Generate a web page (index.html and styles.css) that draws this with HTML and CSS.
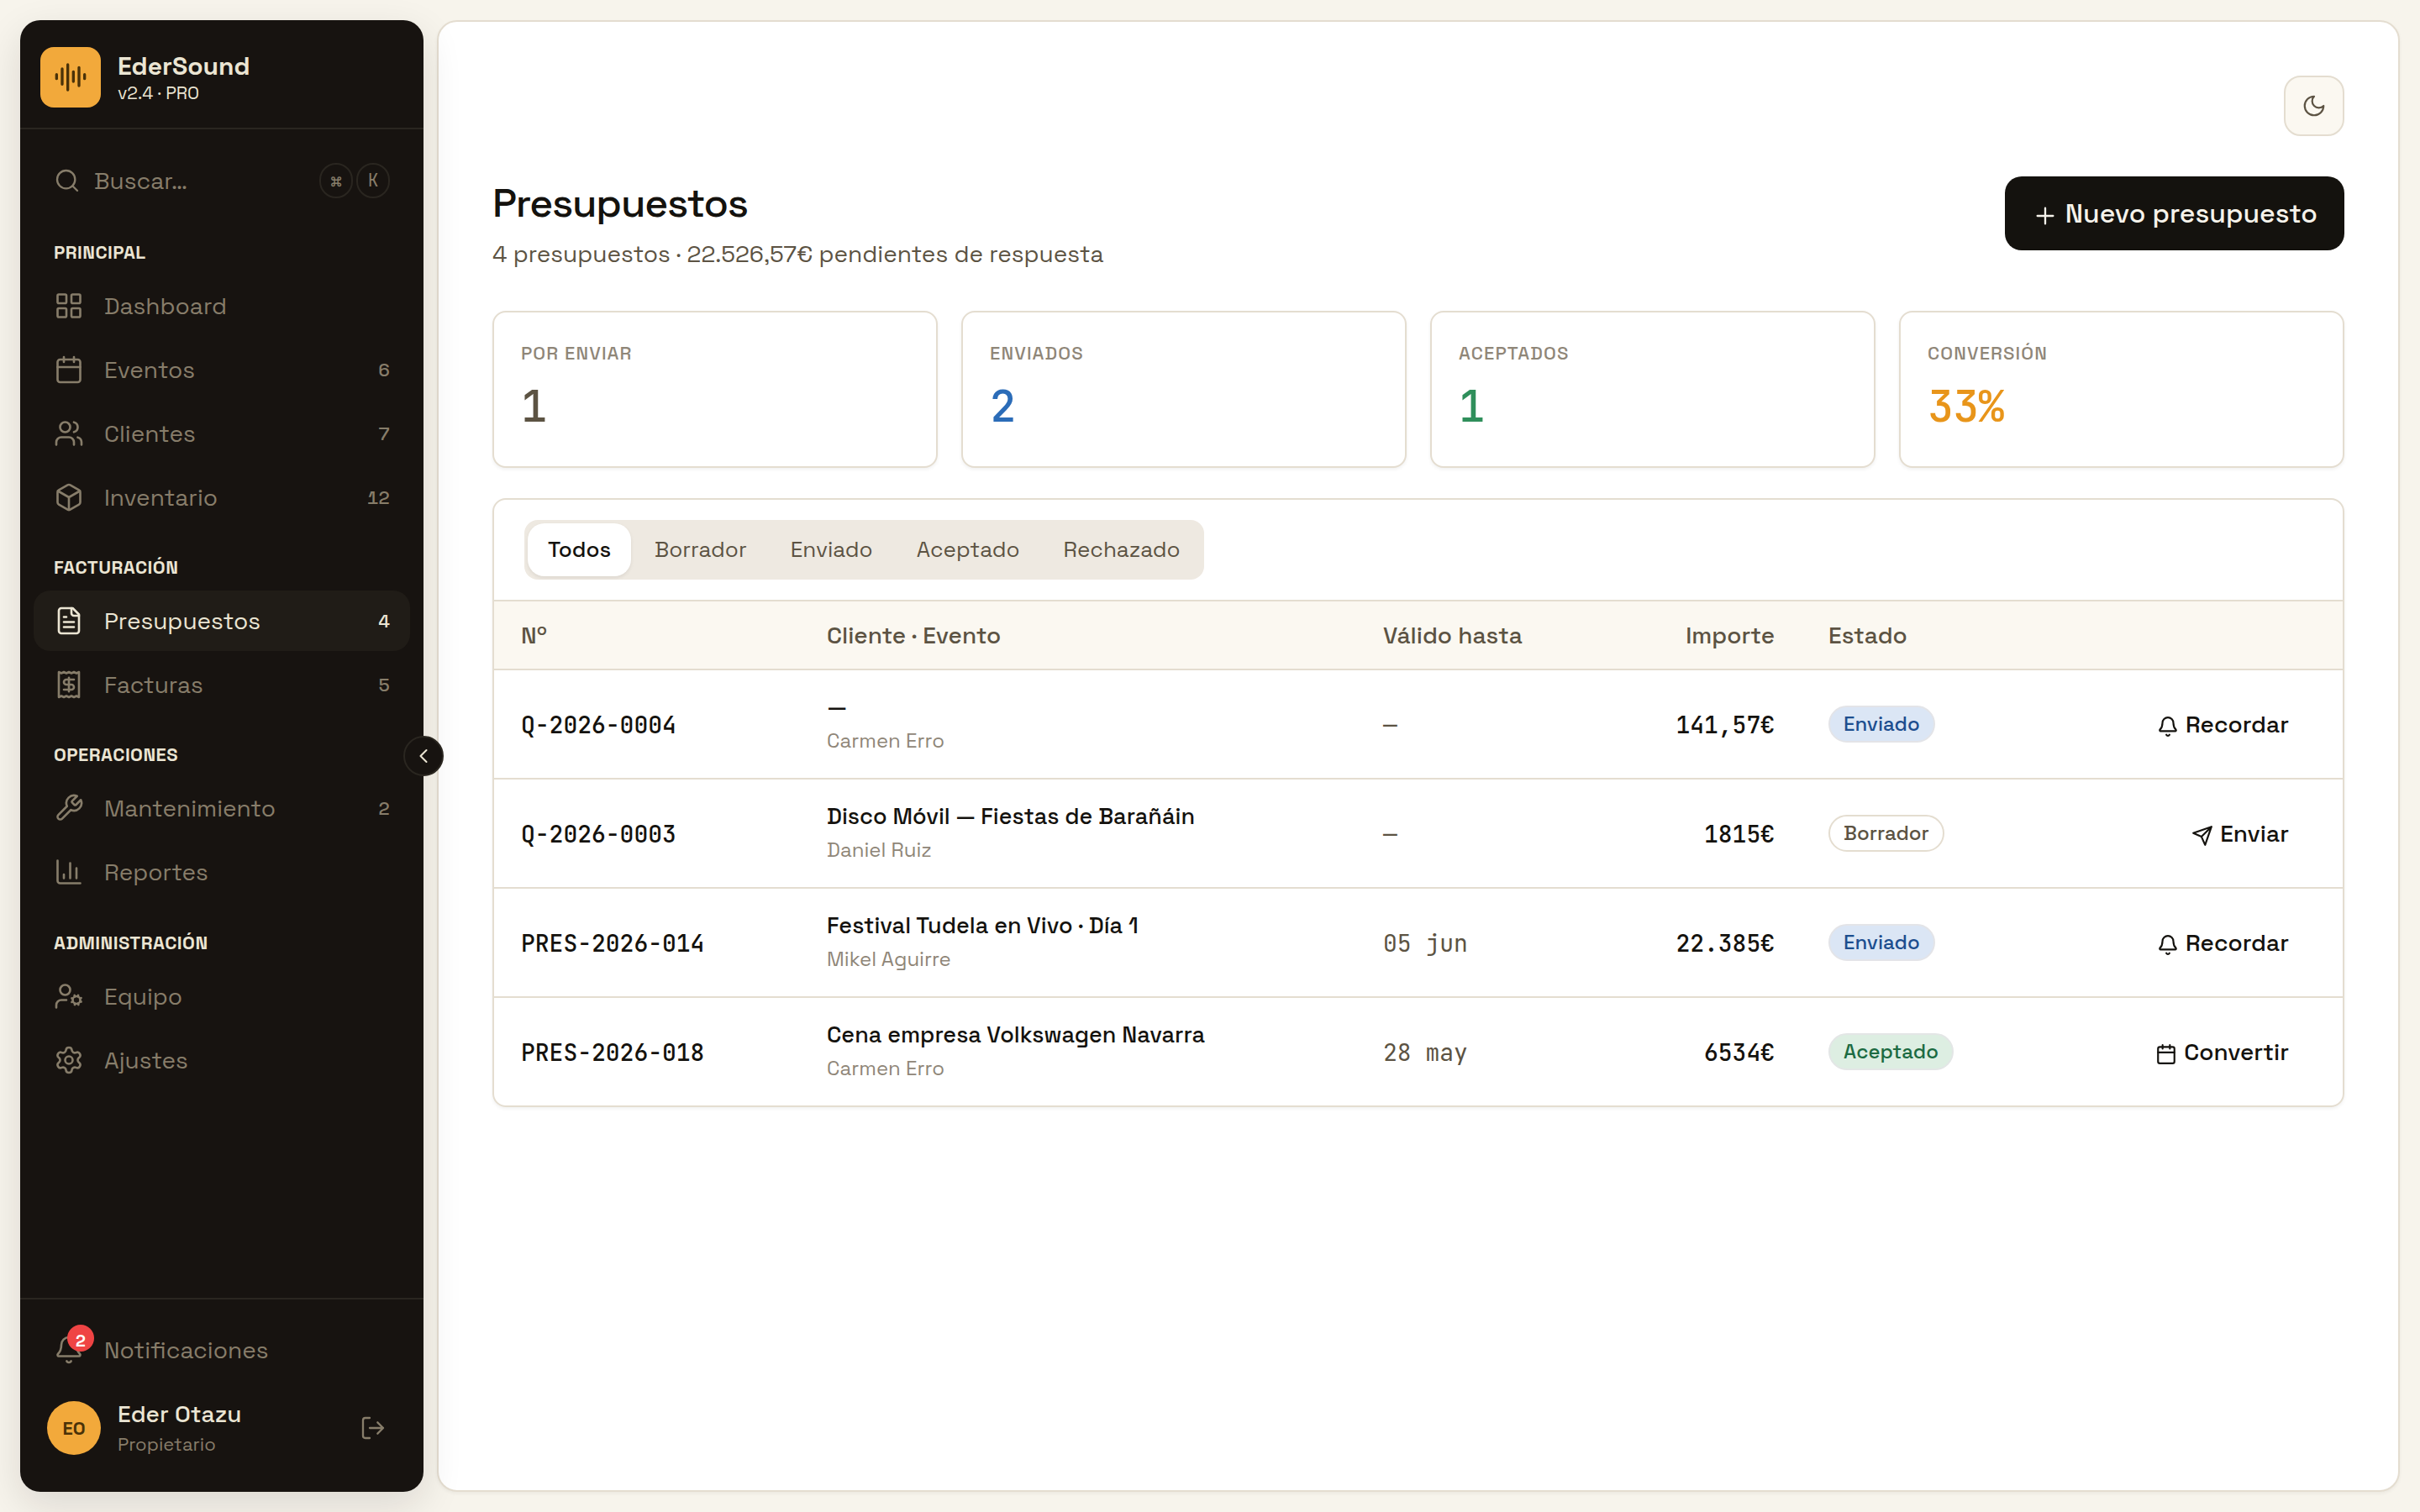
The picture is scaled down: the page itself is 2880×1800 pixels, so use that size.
FILE: index.html
```html
<!DOCTYPE html>
<html lang="es">
<head>
    <meta charset="UTF-8">
    <meta name="viewport" content="width=device-width, initial-scale=1.0">
    <title>EderSound - Presupuestos</title>
    <link rel="stylesheet" href="styles.css">
</head>
<body>
<!-- iconos -->
<svg class="sprite" width="0" height="0">
    <symbol id="i-audio" viewBox="0 0 24 24"><path d="M2 10v3M6 6v11M10 3v18M14 8v7M18 5v13M22 10v3"/></symbol>
    <symbol id="i-search" viewBox="0 0 24 24"><circle cx="11" cy="11" r="8"/><path d="m21 21-4.3-4.3"/></symbol>
    <symbol id="i-grid" viewBox="0 0 24 24"><rect x="3" y="3" width="7" height="7" rx="1"/><rect x="14" y="3" width="7" height="7" rx="1"/><rect x="14" y="14" width="7" height="7" rx="1"/><rect x="3" y="14" width="7" height="7" rx="1"/></symbol>
    <symbol id="i-calendar" viewBox="0 0 24 24"><path d="M8 2v4M16 2v4M3 10h18"/><rect x="3" y="4" width="18" height="18" rx="2"/></symbol>
    <symbol id="i-users" viewBox="0 0 24 24"><path d="M16 21v-2a4 4 0 0 0-4-4H6a4 4 0 0 0-4 4v2M22 21v-2a4 4 0 0 0-3-3.87M16 3.13a4 4 0 0 1 0 7.75"/><circle cx="9" cy="7" r="4"/></symbol>
    <symbol id="i-box" viewBox="0 0 24 24"><path d="M21 8a2 2 0 0 0-1-1.73l-7-4a2 2 0 0 0-2 0l-7 4A2 2 0 0 0 3 8v8a2 2 0 0 0 1 1.73l7 4a2 2 0 0 0 2 0l7-4A2 2 0 0 0 21 16Z"/><path d="m3.3 7 8.7 5 8.7-5M12 22V12"/></symbol>
    <symbol id="i-file" viewBox="0 0 24 24"><path d="M15 2H6a2 2 0 0 0-2 2v16a2 2 0 0 0 2 2h12a2 2 0 0 0 2-2V7Z"/><path d="M14 2v4a2 2 0 0 0 2 2h4M10 9H8M16 13H8M16 17H8"/></symbol>
    <symbol id="i-receipt" viewBox="0 0 24 24"><path d="M4 2v20l2-1 2 1 2-1 2 1 2-1 2 1 2-1 2 1V2l-2 1-2-1-2 1-2-1-2 1-2-1-2 1Z"/><path d="M16 8h-6a2 2 0 1 0 0 4h4a2 2 0 1 1 0 4H8M12 17.5v-11"/></symbol>
    <symbol id="i-wrench" viewBox="0 0 24 24"><path d="M14.7 6.3a1 1 0 0 0 0 1.4l1.6 1.6a1 1 0 0 0 1.4 0l3.77-3.77a6 6 0 0 1-7.94 7.94l-6.91 6.91a2.12 2.12 0 0 1-3-3l6.91-6.91a6 6 0 0 1 7.94-7.94l-3.76 3.76z"/></symbol>
    <symbol id="i-chart" viewBox="0 0 24 24"><path d="M3 3v16a2 2 0 0 0 2 2h16M18 17V9M13 17V5M8 17v-3"/></symbol>
    <symbol id="i-usercog" viewBox="0 0 24 24"><circle cx="9" cy="7" r="4"/><circle cx="18" cy="15" r="3"/><path d="M10 15H6a4 4 0 0 0-4 4v2M21.7 16.4l-.9-.3M15.2 13.9l-.9-.3M16.6 18.7l.3-.9M19.1 12.2l.3-.9M19.6 18.7l-.4-1M16.8 12.3l-.4-1M14.3 16.6l1-.4M20.7 13.8l1-.4"/></symbol>
    <symbol id="i-settings" viewBox="0 0 24 24"><path d="M9.671 4.136a2.34 2.34 0 0 1 4.659 0 2.34 2.34 0 0 0 3.319 1.915 2.34 2.34 0 0 1 2.33 4.033 2.34 2.34 0 0 0 0 3.831 2.34 2.34 0 0 1-2.33 4.033 2.34 2.34 0 0 0-3.319 1.915 2.34 2.34 0 0 1-4.659 0 2.34 2.34 0 0 0-3.32-1.915 2.34 2.34 0 0 1-2.33-4.033 2.34 2.34 0 0 0 0-3.831A2.34 2.34 0 0 1 6.35 6.051a2.34 2.34 0 0 0 3.319-1.915"/><circle cx="12" cy="12" r="3"/></symbol>
    <symbol id="i-bell" viewBox="0 0 24 24"><path d="M10.268 21a2 2 0 0 0 3.464 0M3.262 15.326A1 1 0 0 0 4 17h16a1 1 0 0 0 .74-1.673C19.41 13.956 18 12.499 18 8A6 6 0 0 0 6 8c0 4.499-1.411 5.956-2.738 7.326"/></symbol>
    <symbol id="i-logout" viewBox="0 0 24 24"><path d="m16 17 5-5-5-5M21 12H9M9 21H5a2 2 0 0 1-2-2V5a2 2 0 0 1 2-2h4"/></symbol>
    <symbol id="i-chevron" viewBox="0 0 24 24"><path d="m15 18-6-6 6-6"/></symbol>
    <symbol id="i-moon" viewBox="0 0 24 24"><path d="M12 3a6 6 0 0 0 9 9 9 9 0 1 1-9-9Z"/></symbol>
    <symbol id="i-plus" viewBox="0 0 24 24"><path d="M5 12h14M12 5v14"/></symbol>
    <symbol id="i-send" viewBox="0 0 24 24"><path d="m22 2-7 20-4-9-9-4ZM22 2 11 13"/></symbol>
</svg>

<div class="app">
    <aside class="sidebar">
        <div class="brand">
            <div class="logo"><svg class="icon"><use href="#i-audio"/></svg></div>
            <div>
                <p class="brand-name">EderSound</p>
                <p class="brand-version">v2.4 · PRO</p>
            </div>
        </div>

        <nav class="nav">
            <div class="search">
                <svg class="icon"><use href="#i-search"/></svg>
                <span class="search-text">Buscar…</span>
                <kbd>⌘</kbd>
                <kbd>K</kbd>
            </div>
            <h2>Principal</h2>
            <ul>
                <li><svg class="icon"><use href="#i-grid"/></svg><span>Dashboard</span></li>
                <li><svg class="icon"><use href="#i-calendar"/></svg><span>Eventos</span><b>6</b></li>
                <li><svg class="icon"><use href="#i-users"/></svg><span>Clientes</span><b>7</b></li>
                <li><svg class="icon"><use href="#i-box"/></svg><span>Inventario</span><b>12</b></li>
            </ul>
            <h2>Facturación</h2>
            <ul>
                <li class="active"><svg class="icon"><use href="#i-file"/></svg><span>Presupuestos</span><b>4</b></li>
                <li><svg class="icon"><use href="#i-receipt"/></svg><span>Facturas</span><b>5</b></li>
            </ul>
            <h2>Operaciones</h2>
            <ul>
                <li><svg class="icon"><use href="#i-wrench"/></svg><span>Mantenimiento</span><b>2</b></li>
                <li><svg class="icon"><use href="#i-chart"/></svg><span>Reportes</span></li>
            </ul>
            <h2>Administración</h2>
            <ul>
                <li><svg class="icon"><use href="#i-usercog"/></svg><span>Equipo</span></li>
                <li><svg class="icon"><use href="#i-settings"/></svg><span>Ajustes</span></li>
            </ul>
        </nav>

        <div class="side-footer">
            <div class="notifications">
                <div class="bell"><svg class="icon"><use href="#i-bell"/></svg><span class="bell-count">2</span></div>
                <span>Notificaciones</span>
            </div>
            <div class="user">
                <div class="avatar">EO</div>
                <div class="user-info">
                    <p class="user-name">Eder Otazu</p>
                    <p class="user-role">Propietario</p>
                </div>
                <svg class="icon"><use href="#i-logout"/></svg>
            </div>
        </div>
        <button class="collapse"><svg class="icon"><use href="#i-chevron"/></svg></button>
    </aside>

    <main class="main">
        <div class="topbar">
            <button class="theme"><svg class="icon"><use href="#i-moon"/></svg></button>
        </div>
        <header class="page-header">
            <div>
                <h1>Presupuestos</h1>
                <p class="subtitle">4 presupuestos · 22.526,57€ pendientes de respuesta</p>
            </div>
            <button class="new"><svg class="icon"><use href="#i-plus"/></svg>Nuevo presupuesto</button>
        </header>

        <section class="stats">
            <div class="stat"><h3>Por enviar</h3><p class="value">1</p></div>
            <div class="stat"><h3>Enviados</h3><p class="value blue">2</p></div>
            <div class="stat"><h3>Aceptados</h3><p class="value green">1</p></div>
            <div class="stat"><h3>Conversión</h3><p class="value amber">33%</p></div>
        </section>

        <section class="panel">
            <div class="toolbar">
                <div class="tabs">
                    <button class="tab selected">Todos</button>
                    <button class="tab">Borrador</button>
                    <button class="tab">Enviado</button>
                    <button class="tab">Aceptado</button>
                    <button class="tab">Rechazado</button>
                </div>
            </div>
            <table>
                <colgroup>
                    <col class="c-num"><col class="c-client"><col class="c-date"><col class="c-amount"><col class="c-state"><col>
                </colgroup>
                <thead>
                    <tr><th>Nº</th><th>Cliente · Evento</th><th>Válido hasta</th><th class="right">Importe</th><th>Estado</th><th></th></tr>
                </thead>
                <tbody>
                    <tr>
                        <td class="mono">Q-2026-0004</td>
                        <td><p class="event">—</p><p class="client">Carmen Erro</p></td>
                        <td class="mono date">—</td>
                        <td class="mono right">141,57€</td>
                        <td><span class="badge sent">Enviado</span></td>
                        <td><button class="action"><svg class="icon"><use href="#i-bell"/></svg>Recordar</button></td>
                    </tr>
                    <tr>
                        <td class="mono">Q-2026-0003</td>
                        <td><p class="event">Disco Móvil — Fiestas de Barañáin</p><p class="client">Daniel Ruiz</p></td>
                        <td class="mono date">—</td>
                        <td class="mono right">1815€</td>
                        <td><span class="badge">Borrador</span></td>
                        <td><button class="action"><svg class="icon"><use href="#i-send"/></svg>Enviar</button></td>
                    </tr>
                    <tr>
                        <td class="mono">PRES-2026-014</td>
                        <td><p class="event">Festival Tudela en Vivo · Día 1</p><p class="client">Mikel Aguirre</p></td>
                        <td class="mono date">05 jun</td>
                        <td class="mono right">22.385€</td>
                        <td><span class="badge sent">Enviado</span></td>
                        <td><button class="action"><svg class="icon"><use href="#i-bell"/></svg>Recordar</button></td>
                    </tr>
                    <tr>
                        <td class="mono">PRES-2026-018</td>
                        <td><p class="event">Cena empresa Volkswagen Navarra</p><p class="client">Carmen Erro</p></td>
                        <td class="mono date">28 may</td>
                        <td class="mono right">6534€</td>
                        <td><span class="badge accepted">Aceptado</span></td>
                        <td><button class="action"><svg class="icon"><use href="#i-calendar"/></svg>Convertir</button></td>
                    </tr>
                </tbody>
            </table>
        </section>
    </main>
</div>
</body>
</html>
```
FILE: styles.css
```css
:root{
    --bg: #f7f4ec;
    --line: #e4ddd0;
    --ink: #14120e;
    --ink-2: #5c5343;
    --ink-3: #8f8678;
    --dark: #171310;
    --dark-line: #2a2620;
    --cream: #ebe5d3;
    --muted: #877d6a;
    --amber: #f2a93b;
    --sans: "Space Grotesk", Inter, sans-serif;
    --mono: "JetBrains Mono", "DejaVu Sans Mono", monospace;
}
*{
    box-sizing: border-box;
    margin: 0;
    padding: 0;
}
body{
    background: var(--bg);
    color: var(--ink);
    font-family: var(--sans);
    font-size: 28px;
}
button{
    font: inherit;
    color: inherit;
    border: none;
    background: none;
}
ul{
    list-style: none;
}
.sprite{
    position: absolute;
}
.icon{
    display: block;
    flex: none;
    fill: none;
    stroke: currentColor;
    stroke-width: 1.75;
    stroke-linecap: round;
    stroke-linejoin: round;
}
.app{
    display: flex;
    gap: 16px;
    height: 1800px;
    padding: 24px;
}

/* sidebar */
.sidebar{
    position: relative;
    z-index: 1;
    display: flex;
    flex-direction: column;
    width: 480px;
    border-radius: 24px;
    background: var(--dark);
    color: var(--muted);
    box-shadow: 0 16px 48px rgba(23,19,16,.12);
}
.brand{
    display: flex;
    gap: 20px;
    height: 130px;
    padding: 32px 24px 0;
    border-bottom: 2px solid var(--dark-line);
    color: var(--cream);
}
.logo{
    display: flex;
    align-items: center;
    justify-content: center;
    width: 72px;
    height: 72px;
    border-radius: 16px;
    background: var(--amber);
    color: #4a3208;
}
.logo .icon{
    width: 40px;
    height: 40px;
    stroke-width: 2;
}
.brand-name{
    margin-top: 4px;
    font-size: 30px;
    font-weight: 600;
    line-height: 38px;
}
.brand-version{
    font-size: 21px;
    line-height: 26px;
}
.nav{
    flex: 1;
    padding: 25px 16px 0;
}
.search{
    display: flex;
    align-items: center;
    gap: 4px;
    height: 72px;
    padding: 0 24px;
}
.search .icon{
    width: 32px;
    height: 32px;
    margin-right: 12px;
}
.search-text{
    flex: 1;
}
kbd{
    width: 40px;
    height: 42px;
    border: 2px solid var(--dark-line);
    border-radius: 21px;
    font-family: var(--mono);
    font-size: 21px;
    line-height: 38px;
    text-align: center;
}
.nav h2{
    margin: 33.4px 0 14px 24px;
    color: var(--cream);
    font-size: 22px;
    font-weight: 600;
    line-height: 28px;
    letter-spacing: .02em;
    text-transform: uppercase;
}
.search + h2{
    margin-top: 34.7px;
}
.nav ul{
    display: flex;
    flex-direction: column;
    gap: 4px;
}
.nav li{
    display: flex;
    align-items: center;
    gap: 24px;
    height: 72px;
    padding: 0 24px;
    border-radius: 20px;
}
.nav li .icon, .bell .icon{
    width: 36px;
    height: 36px;
}
.nav li span{
    flex: 1;
}
.nav li b{
    font-size: 22px;
    font-weight: 500;
    font-variant-numeric: tabular-nums;
}
.nav li.active{
    background: #201c17;
    color: var(--cream);
}
.side-footer{
    height: 231px;
    padding: 24px 16px 0;
    border-top: 2px solid var(--dark-line);
}
.notifications{
    display: flex;
    align-items: center;
    gap: 24px;
    height: 72px;
    padding: 0 24px;
}
.bell{
    position: relative;
}
.bell-count{
    position: absolute;
    top: -12px;
    left: 16px;
    width: 32px;
    height: 32px;
    border-radius: 50%;
    background: #ef4444;
    color: #fff;
    font-size: 20px;
    font-weight: 600;
    line-height: 38px;
    text-align: center;
}
.user{
    display: flex;
    align-items: center;
    gap: 20px;
    height: 72px;
    margin-top: 21px;
    padding: 0 28px 0 16px;
}
.user > .icon{
    width: 32px;
    height: 32px;
}
.avatar{
    width: 64px;
    height: 64px;
    border-radius: 50%;
    background: var(--amber);
    color: #4a3208;
    font-size: 22px;
    font-weight: 600;
    line-height: 64px;
    text-align: center;
}
.user-info{
    flex: 1;
}
.user-name{
    color: var(--cream);
    font-weight: 500;
    line-height: 38px;
}
.user-role{
    font-size: 22px;
    line-height: 35px;
}
.collapse{
    position: absolute;
    top: 852px;
    right: -24px;
    display: flex;
    align-items: center;
    justify-content: center;
    width: 48px;
    height: 48px;
    border: 2px solid var(--dark-line);
    border-radius: 50%;
    background: var(--dark);
    color: var(--cream);
}
.collapse .icon{
    width: 28px;
    height: 28px;
}

/* contenido */
.main{
    flex: 1;
    padding: 64px;
    border: 2px solid var(--line);
    border-radius: 24px;
    background: #fff;
    box-shadow: 0 2px 4px rgba(20,18,14,.05);
}
.topbar{
    display: flex;
    justify-content: flex-end;
    margin-bottom: 48px;
}
.theme{
    display: flex;
    align-items: center;
    justify-content: center;
    width: 72px;
    height: 72px;
    border: 2px solid var(--line);
    border-radius: 20px;
    background: #fbf8f1;
    color: var(--ink-2);
}
.theme .icon{
    width: 30px;
    height: 30px;
}
.page-header{
    display: flex;
    align-items: flex-start;
    justify-content: space-between;
    height: 160px;
}
h1{
    font-size: 48px;
    font-weight: 500;
    line-height: 63px;
    letter-spacing: -.025em;
}
.subtitle{
    margin-top: 7px;
    color: var(--ink-2);
    line-height: 44px;
}
.new{
    display: flex;
    align-items: center;
    gap: 8px;
    height: 88px;
    padding: 0 32px;
    border-radius: 20px;
    background: var(--ink);
    color: #f6f3eb;
    font-size: 32px;
    font-weight: 500;
}
.new .icon{
    width: 32px;
    height: 32px;
    margin-top: 6px;
}
.stats{
    display: grid;
    grid-template-columns: repeat(4, 1fr);
    gap: 28px;
    margin-bottom: 36px;
}
.stat{
    height: 187px;
    padding: 34px 32px;
    border: 2px solid var(--line);
    border-radius: 16px;
    background: #fff;
    box-shadow: 0 2px 4px rgba(20,18,14,.06);
}
.stat h3{
    color: var(--ink-3);
    font-size: 22px;
    font-weight: 500;
    line-height: 28px;
    letter-spacing: .05em;
    text-transform: uppercase;
}
.value{
    margin-top: 15px;
    color: var(--ink-2);
    font-family: var(--mono);
    font-size: 52px;
    font-weight: 500;
    line-height: 70px;
    letter-spacing: -.02em;
}
.blue{
    color: #2b6cb8;
}
.green{
    color: #2f8f5b;
}
.amber{
    color: #e8951a;
}

/* tabla */
.panel{
    overflow: hidden;
    border: 2px solid var(--line);
    border-radius: 16px;
    box-shadow: 0 2px 4px rgba(20,18,14,.06);
}
.toolbar{
    display: flex;
    padding: 24px 36px;
    border-bottom: 2px solid var(--line);
}
.tabs{
    display: flex;
    gap: 4px;
    padding: 4px;
    border-radius: 16px;
    background: #eee9e1;
}
.tab{
    height: 63px;
    padding: 0 24px 2px;
    border-radius: 20px;
    color: var(--ink-2);
    font-size: 26px;
}
.tab.selected{
    background: #fff;
    color: var(--ink);
    font-weight: 500;
    box-shadow: 0 2px 4px rgba(20,18,14,.08);
}
table{
    width: 100%;
    table-layout: fixed;
    border-collapse: separate;
    border-spacing: 0;
}
.c-num{
    width: 364px;
}
.c-client{
    width: 662px;
}
.c-date{
    width: 260px;
}
.c-amount{
    width: 270px;
}
.c-state{
    width: 250px;
}
th{
    height: 82px;
    padding: 0 32px;
    border-bottom: 2px solid var(--line);
    background: #fbf8f1;
    color: var(--ink-2);
    font-weight: 500;
    text-align: left;
    white-space: nowrap;
}
td{
    height: 130px;
    padding: 0 32px;
    border-bottom: 2px solid var(--line);
    vertical-align: middle;
}
tbody tr:last-child td{
    height: 128px;
    border-bottom: none;
}
.right{
    text-align: right;
}
.mono{
    font-family: var(--mono);
    font-weight: 500;
    white-space: nowrap;
}
.date{
    color: var(--ink-2);
    font-weight: 400;
}
.event{
    font-size: 27px;
    font-weight: 500;
    line-height: 40px;
}
.client{
    color: var(--ink-3);
    font-size: 24px;
    line-height: 40px;
}
.badge{
    display: block;
    width: fit-content;
    height: 44px;
    padding: 0 16px;
    border: 2px solid var(--line);
    border-radius: 22px;
    color: var(--ink-2);
    font-size: 24px;
    font-weight: 500;
    line-height: 40px;
}
.badge.sent{
    border-color: #e3e4e8;
    background: #dbe6f5;
    color: #1d4e8f;
}
.badge.accepted{
    border-color: #e3e6e6;
    background: #ddeee2;
    color: #1c6b42;
}
.action{
    display: flex;
    align-items: center;
    gap: 8px;
    margin-left: auto;
    padding-right: 32px;
    font-weight: 500;
}
.action .icon{
    width: 26px;
    height: 26px;
    margin-top: 6px;
    stroke-width: 2;
}
```
